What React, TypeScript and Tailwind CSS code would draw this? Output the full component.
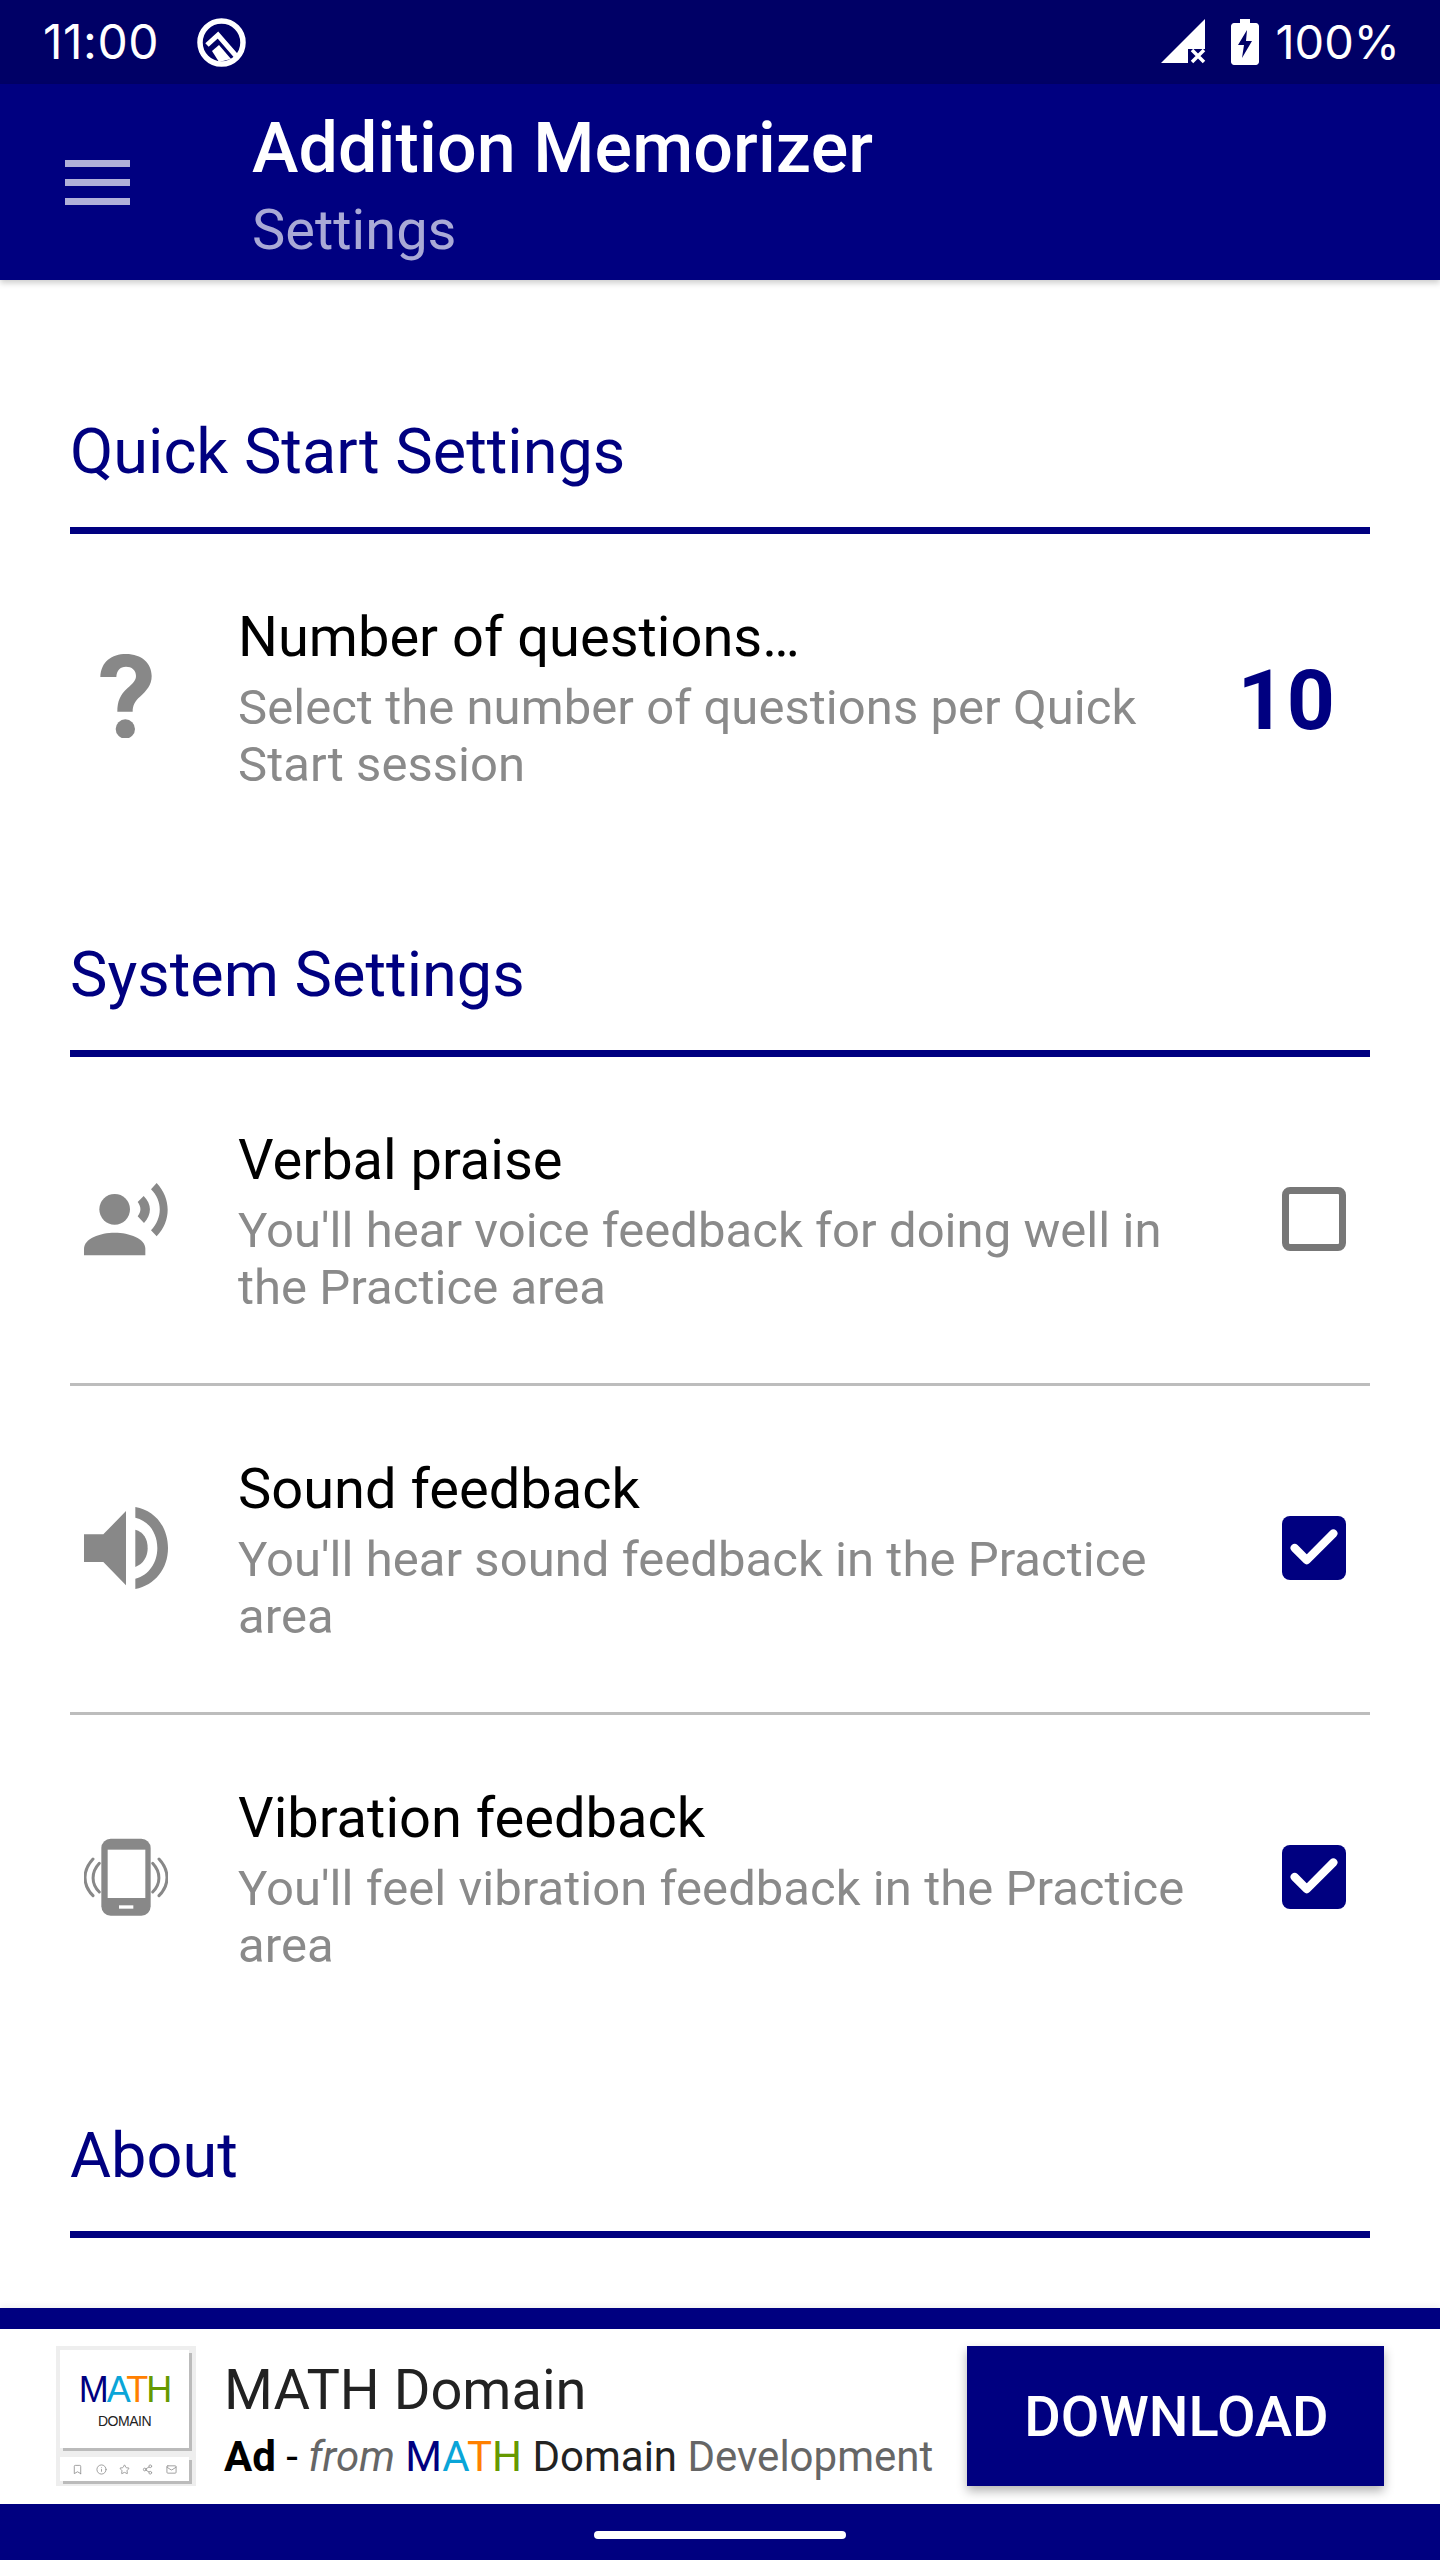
import { type ReactNode } from "react"
import { Bookmark, Check, Info, Mail, Share2, Star } from "lucide-react"

function QuestionIcon() {
  return (
    <svg viewBox="132 162 252 252" className="w-[84px] h-[84px] -mt-[4px]" fill="#888888">
      <path d="M181 231C183 185 215 162 258 162C305 162 335 190 335 228C335 255 320 272 300 290C285 303 278 315 278 335H232C232 305 240 285 262 265C280 250 288 240 288 228C288 210 275 200 258 200C240 200 230 212 229 231Z" />
      <circle cx="256" cy="387" r="29" />
    </svg>
  )
}

function VoiceIcon() {
  return (
    <svg viewBox="132 140 252 252" className="w-[84px] h-[84px]" fill="#888888">
      <circle cx="224" cy="237" r="46" />
      <path d="M132 375V355C132 325 180 307 224 307S316 325 316 355V375Z" />
      <path d="M311 197C336 222 336 252 312 278L293 258C304 244 304 230 293 215Z" />
      <path d="M350 158C394 205 394 272 350 318L333 300C368 262 368 212 333 177Z" />
    </svg>
  )
}

function SpeakerIcon() {
  return (
    <svg viewBox="132 137 252 252" className="w-[84px] h-[84px]" fill="#888888">
      <path d="M132 222H190L258 152V375L190 305H132Z" />
      <path d="M286 208C310 215 323 235 323 263C323 290 310 310 286 320Z" />
      <path d="M286 140C345 150 384 200 384 263C384 325 345 375 286 386V355C328 345 352 305 352 263C352 220 328 182 286 172Z" />
    </svg>
  )
}

function PhoneIcon() {
  return (
    <svg viewBox="132 134 252 252" className="w-[84px] h-[84px]">
      <rect x="184" y="145" width="148" height="231" rx="28" fill="#888888" />
      <rect x="203" y="178" width="113" height="145" fill="#ffffff" />
      <rect x="237" y="345" width="43" height="10" fill="#ffffff" />
      <g fill="none" stroke="#888888" strokeWidth="9" strokeLinecap="round">
        <path d="M159 206C127 240 127 284 159 316" />
        <path d="M178 219C153 246 153 280 178 305" />
        <path d="M357 206C389 240 389 284 357 316" />
        <path d="M338 219C363 246 363 280 338 305" />
      </g>
    </svg>
  )
}

function QLogo() {
  return (
    <svg viewBox="0 0 65 65" className="w-[65px] h-[65px]" fill="none">
      <circle cx="32.5" cy="32.5" r="21.5" stroke="#ffffff" strokeWidth="5.5" />
      <path d="M18 35L29 25L48 47" stroke="#ffffff" strokeWidth="5" />
      <path d="M23 41L30 35L42 49L30 52Z" fill="#ffffff" />
    </svg>
  )
}

function SignalIcon() {
  return (
    <svg viewBox="0 0 46 46" className="w-[46px] h-[46px]">
      <path d="M0 44L44 0V30H27V44Z" fill="#ffffff" />
      <path d="M31 31L43 43M43 31L31 43" stroke="#ffffff" strokeWidth="3.5" />
    </svg>
  )
}

function BatteryIcon() {
  return (
    <svg viewBox="0 0 28 46" className="w-[28px] h-[46px]">
      <path d="M9 0H19V4H25C26.5 4 28 5.5 28 7V43C28 44.5 26.5 46 25 46H3C1.5 46 0 44.5 0 43V7C0 5.5 1.5 4 3 4H9Z" fill="#ffffff" />
      <path d="M16 11L7 26H13L11 39L21 22H15Z" fill="#000066" />
    </svg>
  )
}

function SectionHeading({ title, className }: { title: string; className?: string }) {
  return (
    <div className={className}>
      <h2 className="text-[63px] leading-[80px] text-[#000080]">{title}</h2>
      <div className="mt-[35px] h-[7px] bg-[#000080]" />
    </div>
  )
}

function SettingRow({
  icon,
  title,
  lines,
  right,
  height,
}: {
  icon: ReactNode
  title: string
  lines: string
  right: ReactNode
  height: string
}) {
  return (
    <div className={`flex items-center ${height}`}>
      <div className="ml-[14px] -mt-[2px] w-[84px] shrink-0 flex justify-center">{icon}</div>
      <div className="ml-[70px] flex-1 self-start pt-[68px]">
        <div className="text-[56px] leading-[70px] text-black">{title}</div>
        <div className="mt-[7px] text-[49px] leading-[57px] tracking-[0.05px] text-[#8a8a8a]">{lines}</div>
      </div>
      <div className="w-[155px] -mt-[2px] shrink-0 flex justify-end">{right}</div>
    </div>
  )
}

function CheckBox({ checked }: { checked: boolean }) {
  if (!checked) {
    return <div className="mr-[24px] w-[64px] h-[64px] rounded-[8px] border-[7px] border-[#777777] bg-white" />
  }
  return (
    <div className="mr-[24px] w-[64px] h-[64px] rounded-[8px] bg-[#000080] flex items-center justify-center">
      <Check size={58} strokeWidth={3.4} className="text-white" />
    </div>
  )
}

function AdLogo() {
  return (
    <div className="w-[140px] h-[140px] shrink-0 bg-[#eeeeee] p-[4px] flex flex-col">
      <div className="h-[98px] bg-white shadow-[3px_3px_0_#bbbbbb] flex flex-col items-center pt-[24px] mr-[3px]">
        <div className="text-[36px] leading-[32px] tracking-[-2px] font-['Liberation_Sans',sans-serif]">
          <span className="text-[#000080]">M</span>
          <span className="text-[#0aa5d8]">A</span>
          <span className="text-[#ff8000]">T</span>
          <span className="text-[#669900]">H</span>
        </div>
        <div className="mt-[7px] text-[14px] leading-[16px] tracking-[-0.5px] text-[#222222] font-['Liberation_Sans',sans-serif]">DOMAIN</div>
      </div>
      <div className="mt-[9px] h-[24px] mr-[3px] bg-white shadow-[3px_3px_0_#bbbbbb] flex items-center justify-around px-[6px] text-[#999999]">
        <Bookmark size={11} />
        <Info size={11} />
        <Star size={11} />
        <Share2 size={11} />
        <Mail size={11} />
      </div>
    </div>
  )
}

export default function App() {
  return (
    <div className="w-[1440px] h-[2560px] bg-white flex flex-col overflow-hidden font-['Roboto',sans-serif]">
      {/* Status bar */}
      <div className="h-[84px] shrink-0 bg-[#000066] flex items-center text-white">
        <span className="ml-[43px] font-['Inter',sans-serif] text-[48px] tracking-[0.5px]">11:00</span>
        <div className="ml-[30px]">
          <QLogo />
        </div>
        <div className="ml-auto flex items-center">
          <SignalIcon />
          <div className="ml-[24px]">
            <BatteryIcon />
          </div>
          <span className="ml-[16px] mr-[40px] font-['Inter',sans-serif] text-[47px]">100%</span>
        </div>
      </div>

      {/* App bar */}
      <header className="h-[196px] shrink-0 bg-[#000080] flex items-center shadow-[0_3px_6px_rgba(0,0,0,0.2)] z-10">
        <div className="ml-[65px] w-[65px] flex flex-col gap-[12px]">
          <div className="h-[7px] bg-[#b0b0d9]" />
          <div className="h-[7px] bg-[#b0b0d9]" />
          <div className="h-[7px] bg-[#b0b0d9]" />
        </div>
        <div className="ml-[122px] mt-[6px]">
          <h1 className="text-[70px] leading-[82px] tracking-[0.1px] font-medium text-white">Addition Memorizer</h1>
          <div className="mt-[8px] text-[56px] leading-[66px] text-[#a9a9d6]">Settings</div>
        </div>
      </header>

      {/* Settings list */}
      <main className="flex-1 overflow-hidden px-[70px] pt-[132px]">
        <SectionHeading title="Quick Start Settings" />
        <SettingRow
          icon={<QuestionIcon />}
          title="Number of questions…"
          lines="Select the number of questions per Quick Start session"
          height="h-[330px]"
          right={<span className="mr-[34px] mt-[6px] text-[84px] leading-none font-bold tracking-[1px] text-[#000080]">10</span>}
        />

        <SectionHeading title="System Settings" className="mt-[71px]" />
        <SettingRow
          icon={<VoiceIcon />}
          title="Verbal praise"
          lines="You'll hear voice feedback for doing well in the Practice area"
          height="h-[326px]"
          right={<CheckBox checked={false} />}
        />
        <div className="h-[3px] bg-[#bdbdbd]" />
        <SettingRow
          icon={<SpeakerIcon />}
          title="Sound feedback"
          lines="You'll hear sound feedback in the Practice area"
          height="h-[326px]"
          right={<CheckBox checked />}
        />
        <div className="h-[3px] bg-[#bdbdbd]" />
        <SettingRow
          icon={<PhoneIcon />}
          title="Vibration feedback"
          lines="You'll feel vibration feedback in the Practice area"
          height="h-[326px]"
          right={<CheckBox checked />}
        />

        <SectionHeading title="About" className="mt-[75px]" />
      </main>

      {/* Ad banner */}
      <div className="shrink-0 border-t-[21px] border-[#000080] h-[196px] bg-white flex items-start pt-[17px] pl-[56px] pr-[56px] shadow-[0_-2px_6px_rgba(0,0,0,0.06)]">
        <AdLogo />
        <div className="ml-[28px] mt-[12px] flex-1 min-w-0">
          <div className="text-[56px] leading-[64px] text-[#222222]">MATH Domain</div>
          <div className="mt-[10px] text-[42px] leading-[50px] whitespace-nowrap text-[#666666]">
            <span className="font-bold text-black">Ad</span>
            <span className="text-black"> - </span>
            <span className="italic">from </span>
            <span className="text-[#000080]">M</span>
            <span className="text-[#0aa5d8]">A</span>
            <span className="text-[#ff8000]">T</span>
            <span className="text-[#669900]">H</span>
            <span className="text-[#222222]"> Domain</span> Development
          </div>
        </div>
        <button className="w-[417px] h-[140px] shrink-0 pt-[2px] pl-[2px] bg-[#000080] text-white text-[56px] font-medium shadow-[0_5px_10px_rgba(0,0,0,0.3)]">
          DOWNLOAD
        </button>
      </div>

      {/* Nav bar */}
      <div className="h-[56px] shrink-0 bg-[#000080] flex justify-center items-end pb-[21px]">
        <div className="w-[252px] h-[8px] rounded-full bg-white" />
      </div>
    </div>
  )
}
